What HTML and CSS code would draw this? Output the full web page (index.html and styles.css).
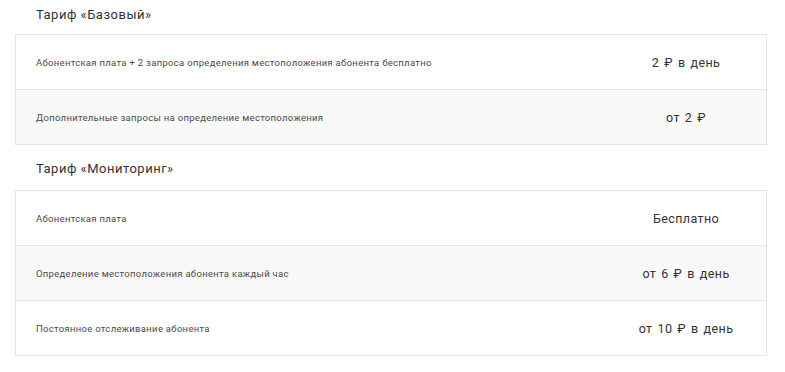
FILE: index.html
```html
<!DOCTYPE html>
<html lang="ru">
<head>
<meta charset="utf-8">
<link rel="stylesheet" href="styles.css">
</head>
<body>
<div class="page">
  <section class="tariff">
    <h2 class="tariff-title">Тариф «Базовый»</h2>
    <div class="table">
      <div class="row">
        <div class="label">Абонентская плата + 2 запроса определения местоположения абонента бесплатно</div>
        <div class="value">2 ₽ в день</div>
      </div>
      <div class="row alt">
        <div class="label">Дополнительные запросы на определение местоположения</div>
        <div class="value">от 2 ₽</div>
      </div>
    </div>
  </section>
  <section class="tariff second">
    <h2 class="tariff-title">Тариф «Мониторинг»</h2>
    <div class="table">
      <div class="row">
        <div class="label">Абонентская плата</div>
        <div class="value">Бесплатно</div>
      </div>
      <div class="row alt">
        <div class="label">Определение местоположения абонента каждый час</div>
        <div class="value">от 6 ₽ в день</div>
      </div>
      <div class="row">
        <div class="label">Постоянное отслеживание абонента</div>
        <div class="value">от 10 ₽ в день</div>
      </div>
    </div>
  </section>
</div>
</body>
</html>
```
FILE: styles.css
```css
html, body {
  margin: 0;
  padding: 0;
  background: #ffffff;
}
body {
  font-family: Roboto, "Liberation Sans", Arial, sans-serif;
  color: #333333;
}
.page {
  padding: 5px 18px 0 15px;
}
.tariff-title {
  margin: 0 0 9px 21px;
  font-size: 13px;
  line-height: 20px;
  font-weight: 400;
  letter-spacing: 0.5px;
  color: #333333;
}
.second {
  margin-top: 14px;
}
.second .tariff-title {
  margin-bottom: 11px;
}
.table {
  border: 1px solid #e4e4e4;
  border-bottom: none;
}
.row {
  display: grid;
  grid-template-columns: 1fr 160px;
  align-items: center;
  height: 54px;
  border-bottom: 1px solid #e4e4e4;
  background: #ffffff;
}
.row.alt {
  background: #f9f9f9;
}
.label {
  padding-left: 20px;
  font-size: 9.5px;
  letter-spacing: 0.3px;
  color: #4a4a4a;
}
.value {
  text-align: center;
  font-size: 12.5px;
  letter-spacing: 0.4px;
  word-spacing: 1.5px;
  color: #333333;
}
```
